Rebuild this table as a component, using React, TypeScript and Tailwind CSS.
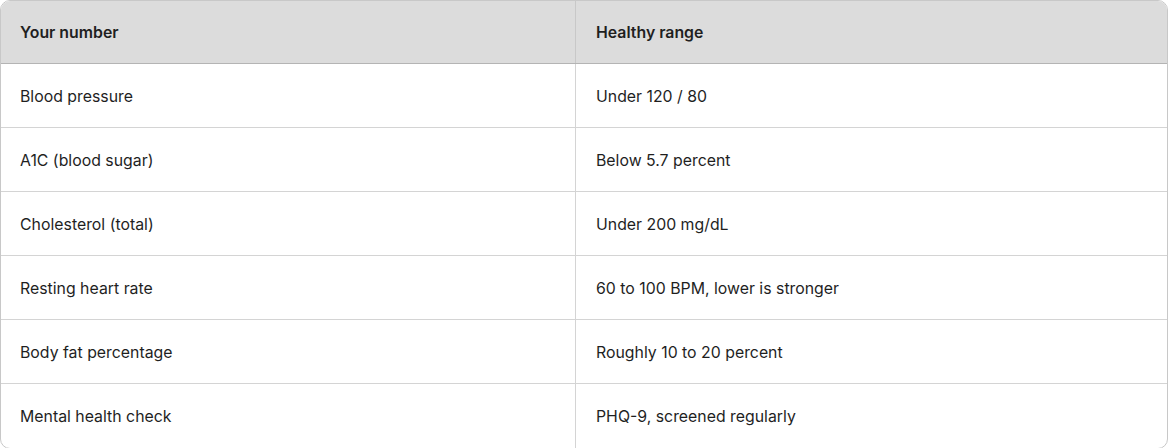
const rows = [
  ['Blood pressure', 'Under 120 / 80'],
  ['A1C (blood sugar)', 'Below 5.7 percent'],
  ['Cholesterol (total)', 'Under 200 mg/dL'],
  ['Resting heart rate', '60 to 100 BPM, lower is stronger'],
  ['Body fat percentage', 'Roughly 10 to 20 percent'],
  ['Mental health check', 'PHQ-9, screened regularly'],
]

export default function App() {
  return (
    <div className="h-[448px] w-[1168px] bg-white font-['Inter',sans-serif] text-[15.85px] text-[#1f1f1f]">
      <div className="overflow-hidden rounded-[10px] border border-[#c8c8c8]">
        <div className="grid h-[63px] grid-cols-[575px_1fr] border-b border-[#b4b4b4] bg-[#dcdcdc] font-semibold">
          <div className="flex items-center border-r border-[#c8c8c8] px-[19px] pt-[2px]">Your number</div>
          <div className="flex items-center px-5 pt-[2px]">Healthy range</div>
        </div>
        {rows.map(([name, range], i) => (
          <div
            key={name}
            className={`grid h-[64px] grid-cols-[575px_1fr] ${i < rows.length - 1 ? 'border-b border-[#d4d4d4]' : 'h-[63px]'}`}
          >
            <div className="flex items-center border-r border-[#d4d4d4] px-[19px] pt-[2px]">{name}</div>
            <div className="flex items-center px-5 pt-[2px]">{range}</div>
          </div>
        ))}
      </div>
    </div>
  )
}
